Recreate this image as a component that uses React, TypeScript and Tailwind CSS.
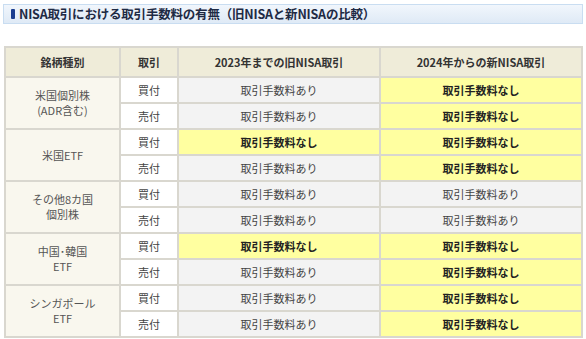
import React from "react";

const rows: { label: React.ReactNode; buy: [boolean, boolean]; sell: [boolean, boolean] }[] = [
  { label: <>米国個別株<br />(ADR含む)</>, buy: [false, true], sell: [false, true] },
  { label: <>米国ETF</>, buy: [true, true], sell: [false, true] },
  { label: <>その他8カ国<br />個別株</>, buy: [false, false], sell: [false, false] },
  { label: <>中国･韓国<br />ETF</>, buy: [true, true], sell: [false, true] },
  { label: <>シンガポール<br />ETF</>, buy: [false, true], sell: [false, true] },
];

function Fee({ free }: { free: boolean }) {
  return free ? (
    <div className="bg-[#ffffa0] flex items-center justify-center font-bold text-[#222]">取引手数料なし</div>
  ) : (
    <div className="bg-[#f3f3f3] flex items-center justify-center text-[#444]">取引手数料あり</div>
  );
}

export default function App() {
  return (
    <div
      className="w-[586px] h-[339px] bg-white"
      style={{ fontFamily: '"Noto Sans CJK JP", "Noto Sans", sans-serif' }}
    >
      <div className="pt-[4px] px-[3px]">
        <div className="h-[20px] border border-[#c9ddf1] bg-gradient-to-b from-[#f1f6fc] to-[#dfeaf6] flex items-center pl-[7px] gap-[4px]">
          <div className="w-[4px] h-[10px] bg-[#1a3d8f] rounded-[1px]" />
          <span className="text-[12.5px] font-bold text-[#1e2a44] leading-none tracking-[-0.2px]">
            NISA取引における取引手数料の有無（旧NISAと新NISAの比較）
          </span>
        </div>
      </div>
      <div className="mt-[22px] ml-[4px] w-[579px] bg-[#d9d7cf] p-[2px] grid grid-cols-[113px_56px_1fr_1fr] grid-rows-[28px_repeat(10,24px)] gap-[2px] text-[11px] leading-[14px]">
        <div className="bg-[#efecd9] flex items-center justify-center font-bold text-[#333]">銘柄種別</div>
        <div className="bg-[#efecd9] flex items-center justify-center font-bold text-[#333]">取引</div>
        <div className="bg-[#efecd9] flex items-center justify-center font-bold text-[#333]">2023年までの旧NISA取引</div>
        <div className="bg-[#efecd9] flex items-center justify-center font-bold text-[#333]">2024年からの新NISA取引</div>
        {rows.map((r, i) => (
          <React.Fragment key={i}>
            <div className="row-span-2 bg-[#f9f7ee] flex items-center justify-center text-center text-[#555] leading-[15px]">
              <div>{r.label}</div>
            </div>
            <div className="bg-white flex items-center justify-center text-[#444]">買付</div>
            <Fee free={r.buy[0]} />
            <Fee free={r.buy[1]} />
            <div className="bg-white flex items-center justify-center text-[#444]">売付</div>
            <Fee free={r.sell[0]} />
            <Fee free={r.sell[1]} />
          </React.Fragment>
        ))}
      </div>
    </div>
  );
}
